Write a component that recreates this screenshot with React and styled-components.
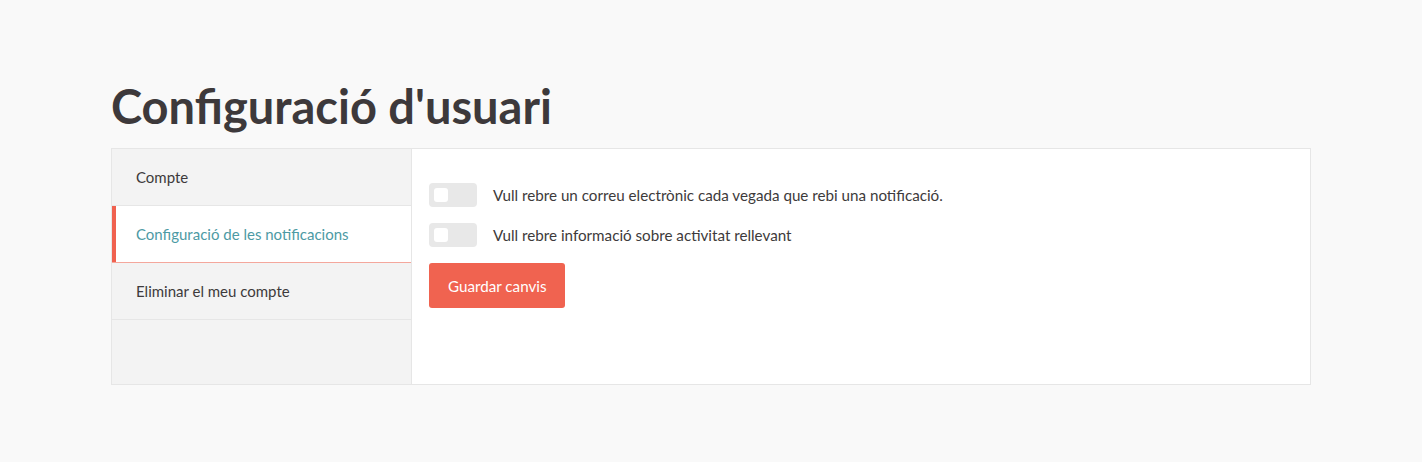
import React, { useState } from "react";
import styled, { createGlobalStyle } from "styled-components";

const GlobalStyle = createGlobalStyle`
  html, body {
    margin: 0;
    padding: 0;
    background: #f9f9f9;
    font-family: Lato, "Open Sans", sans-serif;
    color: #3d3a3b;
  }
`;

const Page = styled.div`
  width: 1200px;
  margin: 0 auto;
  padding-top: 76px;
`;

const Title = styled.h1`
  margin: 0 0 12px 0;
  font-size: 47px;
  font-weight: 700;
  line-height: 60px;
  color: #3d393b;
`;

const Panel = styled.div`
  display: flex;
  border: 1px solid #e6e6e6;
  background: #fff;
  height: 235px;
`;

const Sidebar = styled.nav`
  width: 299px;
  background: #f3f3f3;
  border-right: 1px solid #e6e6e6;
  display: flex;
  flex-direction: column;
`;

const NavItem = styled.div`
  height: 56px;
  display: flex;
  align-items: center;
  padding-left: 24px;
  font-size: 15px;
  cursor: pointer;
  background: ${(p) => (p.$active ? "#fff" : "transparent")};
  color: ${(p) => (p.$active ? "#4d9aa4" : "#3d3a3b")};
  border-bottom: 1px solid ${(p) => (p.$active ? "#f4a79c" : "#e6e6e6")};
  box-shadow: ${(p) => (p.$active ? "inset 4px 0 0 #f0614f" : "none")};
`;

const Content = styled.div`
  flex: 1;
  padding: 34px 17px;
  display: flex;
  flex-direction: column;
  gap: 16px;
`;

const Row = styled.label`
  display: flex;
  align-items: center;
  gap: 16px;
  font-size: 15.2px;
  cursor: pointer;
`;

const Switch = styled.span`
  width: 48px;
  height: 24px;
  border-radius: 4px;
  background: ${(p) => (p.$on ? "#4d9aa4" : "#e8e8e8")};
  position: relative;
  flex: none;

  &::after {
    content: "";
    position: absolute;
    top: 5px;
    left: ${(p) => (p.$on ? "29px" : "5px")};
    width: 14px;
    height: 14px;
    border-radius: 3px;
    background: #fff;
  }
`;

const Button = styled.button`
  align-self: flex-start;
  height: 45px;
  padding: 0 18px 0 19px;
  border: none;
  border-radius: 3px;
  background: #f06350;
  color: #fff;
  font-family: inherit;
  font-size: 15.2px;
  cursor: pointer;
`;

export default function App() {
  const [email, setEmail] = useState(false);
  const [info, setInfo] = useState(false);
  return (
    <>
      <GlobalStyle />
      <Page>
        <Title>Configuració d'usuari</Title>
        <Panel>
          <Sidebar>
            <NavItem>Compte</NavItem>
            <NavItem $active>Configuració de les notificacions</NavItem>
            <NavItem>Eliminar el meu compte</NavItem>
          </Sidebar>
          <Content>
            <Row onClick={() => setEmail(!email)}>
              <Switch $on={email} />
              Vull rebre un correu electrònic cada vegada que rebi una notificació.
            </Row>
            <Row onClick={() => setInfo(!info)}>
              <Switch $on={info} />
              Vull rebre informació sobre activitat rellevant
            </Row>
            <Button>Guardar canvis</Button>
          </Content>
        </Panel>
      </Page>
    </>
  );
}
